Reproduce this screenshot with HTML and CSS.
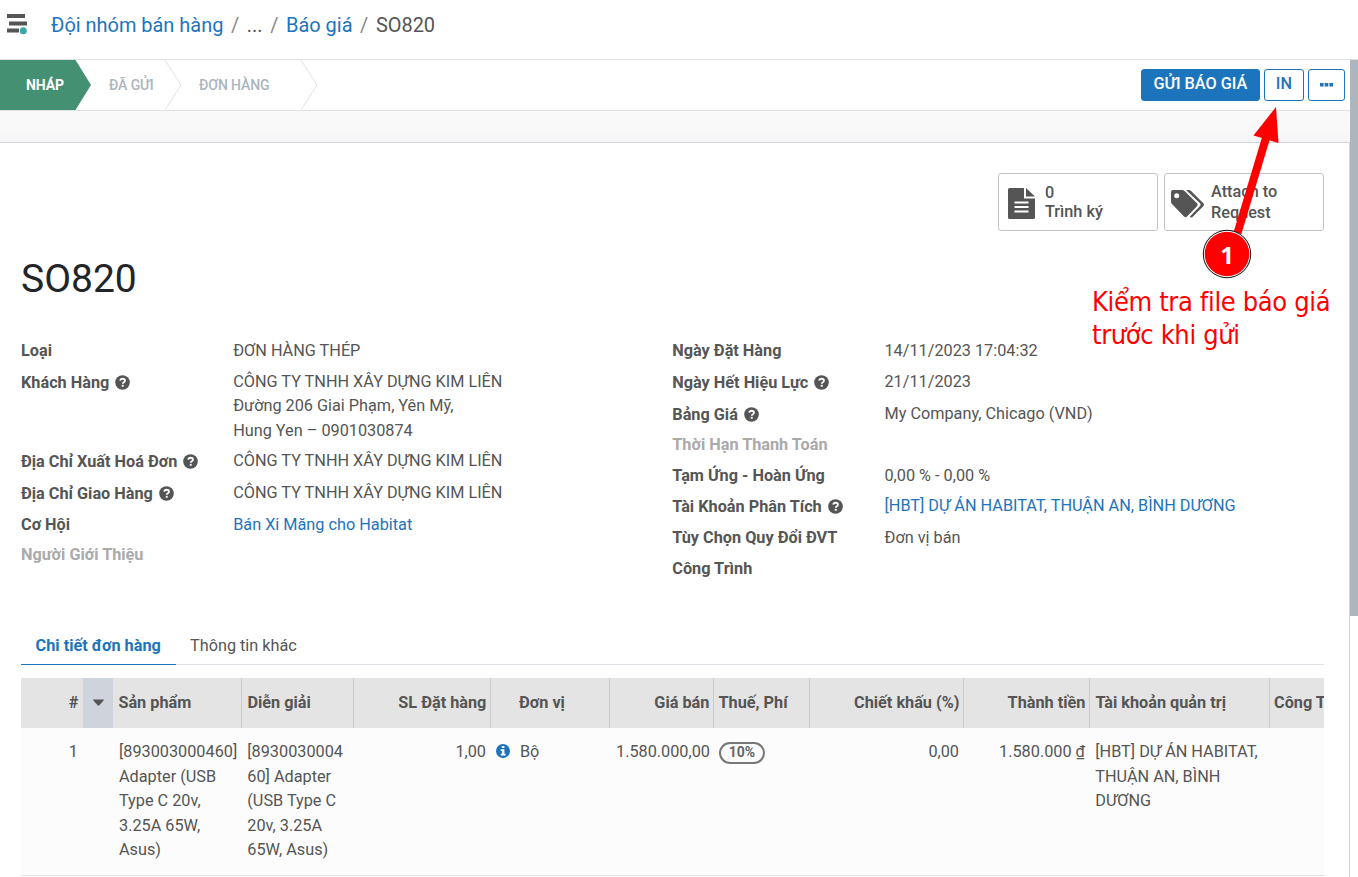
FILE: index.html
```
<!DOCTYPE html>
<html lang="vi">
<head>
<meta charset="utf-8">
<title>SO820</title>
<link rel="stylesheet" href="styles.css">
</head>
<body>
<svg class="defs" width="0" height="0">
  <symbol id="help" viewBox="0 0 16 16"><circle cx="8" cy="8" r="7.8" fill="currentColor"/><path d="M5.600 6.100C5.800 4.700 6.800 4 8.100 4c1.400 0 2.500.8 2.500 2.100 0 1.900-2.300 1.600-2.300 3.300" fill="none" stroke="#fff" stroke-width="1.900"/><path d="M7.200 10.500h2.100v2H7.200z" fill="#fff"/></symbol>
</svg>
<header class="top">
  <svg class="menu-icon" width="22" height="22" viewBox="0 0 22 22"><path d="M1 2h18M3 9.500h18M1 16.500h12" stroke="#555" stroke-width="4" fill="none"/><circle cx="17.300" cy="16.700" r="3.500" fill="#3aa7a9"/></svg>
  <nav class="crumbs"><a>Đội nhóm bán hàng</a><i>/</i><span>...</span><i>/</i><a>Báo giá</a><i>/</i><span>SO820</span></nav>
</header>
<div class="status">
  <svg class="arrows" width="320" height="50" viewBox="0 0 320 50"><path d="M0 0h75.500L91 25 75.500 50H0z" fill="#449072"/><path d="M165 0l16 25-16 25M301 0l16 25-16 25" fill="none" stroke="#dee2e6"/></svg>
  <div class="steps"><span class="s1">NHÁP</span><span class="s2">ĐÃ GỬI</span><span class="s3">ĐƠN HÀNG</span></div>
  <div class="buttons"><button class="btn primary">GỬI BÁO GIÁ</button><button class="btn">IN</button><button class="btn more"><svg width="13" height="4" viewBox="0 0 13 4"><path d="M0 0h3.600v3.600H0zM4.700 0h3.600v3.600H4.700zM9.400 0H13v3.600H9.400z" fill="#1c74bd"/></svg></button></div>
</div>
<div class="band"></div>
<main class="sheet">
  <div class="stats">
    <div class="stat"><svg class="file" width="27" height="31" viewBox="0 0 27 31"><path d="M1.500 0H16v10.500h11v19q0 1.500-1.500 1.500h-24Q0 31 0 29.500v-28Q0 0 1.500 0zM18 0l9 8.500h-9z" fill="#555"/><path d="M6.500 14.500h14M6.500 19h14M6.500 23.500h14" stroke="#fff" stroke-width="2"/></svg><div>0<br>Trình ký</div></div>
    <div class="stat tag"><svg class="tags" width="33" height="28" viewBox="0 0 33 28"><path fill-rule="evenodd" d="M2 0h9q1.500 0 2.600 1L26 13.200q1.500 1.500 0 3L16 26.500q-1.500 1.500-3 0L1 14Q0 13 0 11.500V2Q0 0 2 0zM5.700 3.200a2.500 2.500 0 1 0 0 5 2.500 2.500 0 0 0 0-5z" fill="#555"/><path d="M15 0h2.500q1.500 0 2.600 1L32.300 13.200q1.500 1.500 0 3L22 26.500q-1.700 1.700-3.300.3L29 16q1.200-1.400 0-2.800z" fill="#555"/></svg><div>Attach to<br>Request</div></div>
  </div>
  <h1>SO820</h1>
  <section class="info">
    <dl>
      <div class="row r31"><dt>Loại</dt><dd>ĐƠN HÀNG THÉP</dd></div>
      <div class="row r79"><dt class="q">Khách Hàng<svg><use href="#help"/></svg></dt><dd>CÔNG TY TNHH XÂY DỰNG KIM LIÊN<br>Đường 206 Giai Phạm, Yên Mỹ,<br>Hung Yen – 0901030874</dd></div>
      <div class="row r32"><dt class="q">Địa Chỉ Xuất Hoá Đơn<svg><use href="#help"/></svg></dt><dd>CÔNG TY TNHH XÂY DỰNG KIM LIÊN</dd></div>
      <div class="row r32"><dt class="q">Địa Chỉ Giao Hàng<svg><use href="#help"/></svg></dt><dd>CÔNG TY TNHH XÂY DỰNG KIM LIÊN</dd></div>
      <div class="row r30"><dt>Cơ Hội</dt><dd><a>Bán Xi Măng cho Habitat</a></dd></div>
      <div class="row"><dt class="muted">Người Giới Thiệu</dt></div>
    </dl>
    <dl>
      <div class="row r31"><dt>Ngày Đặt Hàng</dt><dd>14/11/2023 17:04:32</dd></div>
      <div class="row r32"><dt class="q">Ngày Hết Hiệu Lực<svg><use href="#help"/></svg></dt><dd>21/11/2023</dd></div>
      <div class="row r31"><dt class="q">Bảng Giá<svg><use href="#help"/></svg></dt><dd>My Company, Chicago (VND)</dd></div>
      <div class="row r31"><dt class="muted">Thời Hạn Thanh Toán</dt></div>
      <div class="row r30"><dt>Tạm Ứng - Hoàn Ứng</dt><dd>0,00 % - 0,00 %</dd></div>
      <div class="row r32"><dt class="q">Tài Khoản Phân Tích<svg><use href="#help"/></svg></dt><dd><a>[HBT] DỰ ÁN HABITAT, THUẬN AN, BÌNH DƯƠNG</a></dd></div>
      <div class="row r31"><dt>Tùy Chọn Quy Đổi ĐVT</dt><dd>Đơn vị bán</dd></div>
      <div class="row"><dt>Công Trình</dt></div>
    </dl>
  </section>
  <div class="tabs"><span class="tab active">Chi tiết đơn hàng</span><span class="tab">Thông tin khác</span></div>
  <div class="lines">
    <div class="grid head">
      <span class="num plain">#</span><span class="sort"><svg width="11" height="7" viewBox="0 0 11 7"><path d="M0 .5h11Q10.500 2 5.500 7 .5 2 0 .5z" fill="#555"/></svg></span><span>Sản phẩm</span><span>Diễn giải</span><span class="num">SL Đặt hàng</span><span class="unit">Đơn vị</span><span class="num">Giá bán</span><span class="fee">Thuế, Phí</span><span class="num">Chiết khấu (%)</span><span class="num tight">Thành tiền</span><span>Tài khoản quản trị</span><span class="plain last">Công Trình</span>
    </div>
    <div class="grid body">
      <span class="num first">1</span><span></span><span>[893003000460] Adapter (USB Type C 20v, 3.25A 65W, Asus)</span><span class="desc">[8930030004<br>60] Adapter (USB Type C 20v, 3.25A 65W, Asus)</span><span class="num">1,00</span><span class="unit-cell"><svg width="14" height="14" viewBox="0 0 14 14"><circle cx="7" cy="7" r="7" fill="#1c74bd"/><path d="M5.800 2h2.600v2H5.800zM4.700 5.300h3.700v4.500h1.200v1.700H4.700V9.800h1.200V7H4.700z" fill="#fff"/></svg>Bộ</span><span class="num price">1.580.000,00</span><span class="tax"><b>10%</b></span><span class="num">0,00</span><span class="num tight">1.580.000 ₫</span><span class="desc">[HBT] DỰ ÁN HABITAT, THUẬN AN, BÌNH DƯƠNG</span><span></span>
    </div>
  </div>
</main>
<div class="scroll"></div>
<div class="note">
  <svg width="278" height="180" viewBox="0 0 278 180"><path d="M157.500 128L186 33" stroke="#f00" stroke-width="8"/><path d="M196 2L173.500 30.500 198.500 38z" fill="#f00"/><circle cx="147" cy="149" r="24.200" fill="#111"/><circle cx="147" cy="149" r="23.200" fill="#fff"/><circle cx="147" cy="149" r="22.300" fill="#f00"/></svg>
  <b class="badge">1</b>
  <p>Kiểm tra file báo giá<br>trước khi gửi</p>
</div>
</body>
</html>
```
FILE: styles.css
```
* { box-sizing: border-box; }
body { margin: 0; width: 1358px; height: 877px; overflow: hidden; position: relative; background: #fff; color: #555; font: 16.25px/24.4px Roboto, sans-serif; }
a { color: #1c74bd; }
.defs { position: absolute; }
.top { height: 60px; border-bottom: 1px solid #dee2e6; display: flex; padding: 12px 0 0 6px; }
.menu-icon { margin-top: 2px; }
.crumbs { display: flex; margin-left: 23px; font-size: 19.950px; line-height: 26px; }
.crumbs i { font-style: normal; color: #888; margin: 0 7.600px; }
.status { position: relative; width: 1350px; height: 51px; border-bottom: 1px solid #dee2e6; display: flex; justify-content: space-between; }
.arrows { position: absolute; left: 0; top: 0; }
.steps { position: relative; display: flex; padding-left: 26px; font-size: 14px; font-weight: 700; line-height: 50px; color: #adb5bd; letter-spacing: -.1px; }
.s1 { width: 83px; color: #fff; }
.s2 { width: 90px; }
.s2, .s3 { font-weight: 500; }
.buttons { display: flex; gap: 4px; padding: 9px 5px 0 0; }
.btn { height: 32px; padding: 0 11px 2px; border: 1px solid #1c74bd; border-radius: 3px; background: #fff; color: #1c74bd; font: 500 16.25px/28px Roboto, sans-serif; }
.btn.primary { background: #1c74bd; color: #fff; width: 119px; padding: 0 0 2px; }
.btn.more { width: 37px; display: flex; align-items: center; justify-content: center; padding-bottom: 0; }
.band { width: 1350px; height: 32px; border-bottom: 1px solid #ced4da; background: linear-gradient(#f9f9f9 60%, #f5f5f5); }
.sheet { width: 1350px; height: 734px; padding: 30px 25px 0 21px; border-right: 1px solid #ced4da; }
.stats { display: flex; justify-content: flex-end; gap: 6px; height: 58px; }
.stat { width: 160px; border: 1px solid #c0c4c8; border-radius: 3px; display: flex; align-items: center; padding-left: 9px; font-weight: 500; line-height: 19.500px; }
.stat .file { margin-right: 10px; margin-top: 2px; }
.stat.tag { padding-left: 6px; line-height: 21px; }
.tags { margin-right: 7px; margin-top: 3px; }
h1 { margin: 24px 0 0; font-size: 39px; line-height: 48px; font-weight: 400; color: #212529; }
.info { display: grid; grid-template-columns: 651.300px 1fr; margin-top: 36px; height: 287px; }
dl { margin: 0; }
.row { display: grid; grid-template-columns: 212.200px 1fr; }
.r30 { height: 30px; }
.r31 { height: 31px; }
.r32 { height: 32px; }
.r79 { height: 79px; }
dt { font-weight: 700; white-space: nowrap; }
dt.q { padding-top: 1px; }
dt svg { width: 15px; height: 15px; margin-left: 6px; vertical-align: -2px; }
dd { margin: 0; white-space: nowrap; }
.muted { color: #aaa; }
.tabs { display: flex; height: 39px; border-bottom: 1px solid #dee2e6; }
.tab { height: 39px; padding: 8px 14px 0; }
.tab.active { width: 155px; padding-left: 14.600px; color: #1c74bd; font-weight: 700; border-bottom: 1px solid #1c74bd; white-space: nowrap; }
.lines { margin-top: 13px; overflow: hidden; }
.grid { display: grid; grid-template-columns: 62px 30px 129px 112px 137px 119px 104px 96px 154px 126px 180px 54px; }
.head { height: 50px; background: #e4e4e4; font-weight: 700; line-height: 49px; white-space: nowrap; }
.grid > span { padding-left: 5.400px; padding-right: 4px; }
.head > span { border-right: 1px solid #ccc; }
.head > .plain { border: 0; }
.head > .last { padding-left: 4px; }
.head > .fee { padding-left: 4.500px; }
.head > .sort { border: 0; background: #ced3dc; padding-left: 10px; }
.sort svg { vertical-align: 2px; }
.grid .num { text-align: right; }
.head .num { padding-right: 3.600px; }
.head .plain { padding-right: 4.600px; }
.head .unit { padding-left: 28px; }
.body { height: 148px; background: #fcfcfc; border-bottom: 1px solid #dee2e6; padding-top: 12.300px; }
.body > span { padding-left: 6px; }
.body > .desc { padding-left: 5.300px; }
.body .num { padding-right: 5px; }
.body .price { padding-right: 6px; }
.body > .unit-cell { display: flex; align-items: flex-start; gap: 10px; padding-left: 5px; }
.unit-cell svg { margin-top: 4px; }
.body > .tax { padding-left: 5px; }
.tax b { display: block; width: 46px; height: 22px; margin-top: 1.700px; border: 2px solid #777; border-radius: 11px; text-align: center; font-size: 14px; line-height: 17px; color: #666; }
.scroll { position: absolute; left: 1350px; top: 60px; width: 8px; height: 556px; background: #adb5bd; }
.note { position: absolute; left: 1080px; top: 105px; width: 278px; height: 250px; color: #f00; }
.note > svg { position: absolute; left: 0; top: 0; }
.badge { position: absolute; left: 132px; top: 135px; width: 30px; text-align: center; color: #fff; font: 700 24px/30px "Noto Sans", sans-serif; }
.note p { position: absolute; left: 12px; top: 180px; margin: 0; font: 27px/33px "DejaVu Sans Condensed", "DejaVu Sans", sans-serif; font-stretch: condensed; letter-spacing: -.36px; white-space: nowrap; }
```
